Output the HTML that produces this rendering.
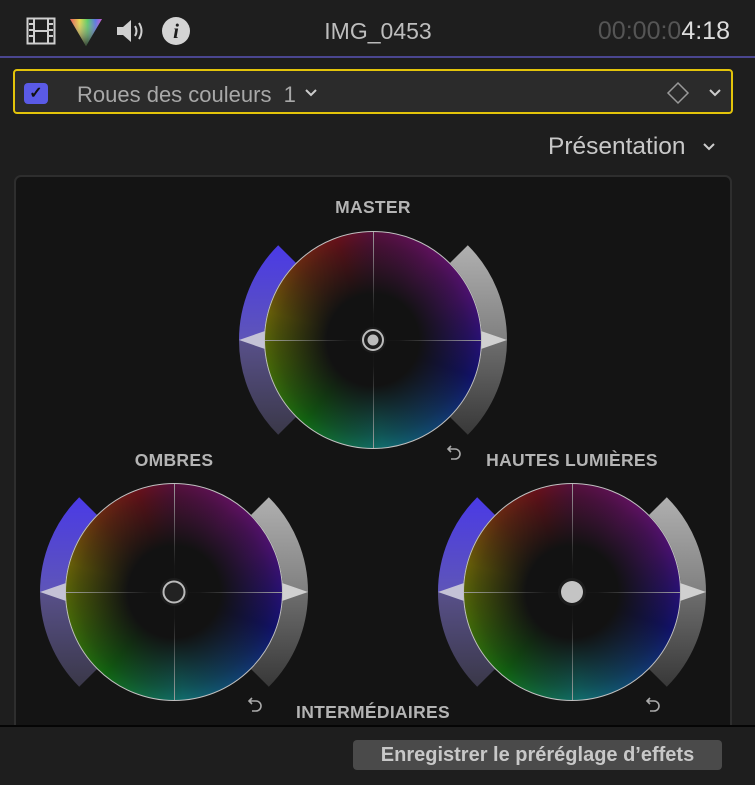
<!DOCTYPE html>
<html><head><meta charset="utf-8"><style>
*{margin:0;padding:0;box-sizing:border-box}
body{width:755px;height:785px;background:#1e1e1e;position:relative;overflow:hidden;font-family:"Liberation Sans",sans-serif}
.abs{position:absolute}
.lbl{position:absolute;color:#b4b4b4;font-weight:bold;font-size:17.5px;transform:translateX(-50%);white-space:nowrap;letter-spacing:.3px}
.wheel{position:absolute;width:270px;height:270px}
.disc{position:absolute;left:26px;top:26px;width:218px;height:218px;border-radius:50%;border:1.5px solid #c0c0c0;
background:radial-gradient(circle,#121212 0%,#121212 30%,rgba(18,18,18,.6) 62%,rgba(18,18,18,0) 100%),
conic-gradient(from 0deg,#901060 0deg,#a010a0 35deg,#7a10c0 65deg,#3a10c8 90deg,#1010b8 110deg,#1060c0 140deg,#10b8b8 175deg,#10b070 195deg,#10b010 220deg,#70b000 255deg,#b0a000 285deg,#b04010 315deg,#b01020 340deg,#901060 360deg)}
.vl{position:absolute;left:134.5px;top:27px;width:1px;height:216px;background:linear-gradient(#999,rgba(120,120,120,.05) 38%,rgba(0,0,0,0) 50%,rgba(120,120,120,.05) 62%,#999)}
.hl{position:absolute;top:134.5px;left:27px;height:1px;width:216px;background:linear-gradient(90deg,#999,rgba(120,120,120,.05) 38%,rgba(0,0,0,0) 50%,rgba(120,120,120,.05) 62%,#999)}
</style></head><body>
<div class="abs" style="left:0;top:0;width:755px;height:58px;background:#1e1e1e;border-bottom:2px solid #4a4690"></div>
<svg class="abs" style="left:26px;top:17px" width="30" height="28" viewBox="0 0 30 28">
<rect x="1.5" y="1.5" width="27" height="25" fill="none" stroke="#cfcfcf" stroke-width="2"/>
<line x1="8" y1="1" x2="8" y2="27" stroke="#cfcfcf" stroke-width="2"/><line x1="22" y1="1" x2="22" y2="27" stroke="#cfcfcf" stroke-width="2"/>
<g fill="#cfcfcf"><rect x="3" y="6" width="4" height="2"/><rect x="3" y="12" width="4" height="2"/><rect x="3" y="18" width="4" height="2"/><rect x="23" y="6" width="4" height="2"/><rect x="23" y="12" width="4" height="2"/><rect x="23" y="18" width="4" height="2"/>
<rect x="9" y="13" width="12" height="2"/></g></svg>
<svg class="abs" style="left:69px;top:17px" width="34" height="30" viewBox="0 0 34 30">
<defs><linearGradient id="tg" x1="0" y1="0" x2="1" y2="0"><stop offset="0" stop-color="#e03030"/><stop offset=".3" stop-color="#e0d020"/><stop offset=".55" stop-color="#30c040"/><stop offset=".8" stop-color="#3050e0"/><stop offset="1" stop-color="#c030c0"/></linearGradient>
<linearGradient id="tg2" x1="0" y1="0" x2="0" y2="1"><stop offset="0" stop-color="#fff" stop-opacity=".2"/><stop offset="1" stop-color="#333" stop-opacity=".9"/></linearGradient></defs>
<polygon points="1,2 33,2 17,29" fill="url(#tg)"/><polygon points="1,2 33,2 17,29" fill="url(#tg2)"/></svg>
<svg class="abs" style="left:115px;top:18px" width="32" height="26" viewBox="0 0 32 26">
<polygon points="2,9 8,9 16,2 16,24 8,17 2,17" fill="#cfcfcf"/>
<path d="M20,8 Q23,13 20,18" stroke="#cfcfcf" stroke-width="2" fill="none"/><path d="M24,5 Q29,13 24,21" stroke="#cfcfcf" stroke-width="2" fill="none"/></svg>
<div class="abs" style="left:162px;top:17px;width:28px;height:28px;border-radius:50%;background:#d4d4d4;color:#1e1e1e;font:italic bold 21px 'Liberation Serif',serif;text-align:center;line-height:28px">i</div>
<div class="abs" style="left:280px;top:18px;width:196px;text-align:center;color:#bdbdbd;font-size:23px">IMG_0453</div>
<div class="abs" style="right:25px;top:17px;font-size:25px;color:#555">00:00:0<span style="color:#ddd">4:18</span></div>
<div class="abs" style="left:13px;top:69px;width:720px;height:45px;border:2px solid #e3c40a;border-radius:4px;background:#2b2b2b"></div>
<div class="abs" style="left:24px;top:83px;width:24px;height:21px;border-radius:4px;background:#5a5ae6;color:#111;font-size:16px;text-align:center;line-height:21px;font-weight:bold">✓</div>
<div class="abs" style="left:77px;top:82px;color:#a8a8a8;font-size:22px">Roues des couleurs&nbsp; 1</div>
<svg class="abs" style="left:304px;top:88px" width="14" height="10"><path d="M2,2 L7,7 L12,2" stroke="#ccc" stroke-width="2" fill="none"/></svg>
<svg class="abs" style="left:666px;top:81px" width="24" height="24"><path d="M12,2 L22,12 L12,22 L2,12 Z" stroke="#999" stroke-width="1.5" fill="none"/></svg>
<svg class="abs" style="left:708px;top:88px" width="14" height="10"><path d="M2,2 L7,7 L12,2" stroke="#ccc" stroke-width="2" fill="none"/></svg>
<div class="abs" style="left:548px;top:133px;color:#c8c8c8;font-size:24.5px">Présentation</div>
<svg class="abs" style="left:702px;top:142px" width="14" height="10"><path d="M2,2 L7,7 L12,2" stroke="#ccc" stroke-width="2" fill="none"/></svg>
<div class="abs" style="left:14px;top:175px;width:718px;height:570px;border:2px solid #2e2e2e;border-radius:7px;background:#141414"></div>

<svg width="0" height="0" style="position:absolute"><defs>
<linearGradient id="lb1" x1="0" y1="0" x2="0" y2="1"><stop offset="0" stop-color="#4a3ae6"/><stop offset="1" stop-color="#5e55b8"/></linearGradient>
<linearGradient id="lb2" x1="0" y1="0" x2="0" y2="1"><stop offset="0" stop-color="#58508a"/><stop offset="1" stop-color="#3a3848"/></linearGradient>
<linearGradient id="rb1" x1="0" y1="0" x2="0" y2="1"><stop offset="0" stop-color="#b0b0b0"/><stop offset="1" stop-color="#808080"/></linearGradient>
<linearGradient id="rb2" x1="0" y1="0" x2="0" y2="1"><stop offset="0" stop-color="#6e6e6e"/><stop offset="1" stop-color="#383838"/></linearGradient>
<g id="arcs">
<path d="M40.2,40.2 A134,134 0 0 0 1,135 L26,135 A109,109 0 0 1 57.9,57.9 Z" fill="url(#lb1)"/>
<path d="M1,135 A134,134 0 0 0 40.2,229.8 L57.9,212.1 A109,109 0 0 1 26,135 Z" fill="url(#lb2)"/>
<path d="M229.8,40.2 A134,134 0 0 1 269,135 L244,135 A109,109 0 0 0 212.1,57.9 Z" fill="url(#rb1)"/>
<path d="M269,135 A134,134 0 0 1 229.8,229.8 L212.1,212.1 A109,109 0 0 0 244,135 Z" fill="url(#rb2)"/>
<polygon points="1,135 27,126 27,144" fill="#c4c2d6"/>
<polygon points="269,135 243,126 243,144" fill="#d0d0d0"/>
</g>
<g id="reset"><path d="M5,3 L2,6 L5,9 M2,6 H9 A5,5 0 0 1 9,16 H5" stroke="#aaa" stroke-width="1.6" fill="none"/></g>
</defs></svg>

<div class="lbl" style="left:373px;top:197px">MASTER</div>
<div class="wheel" style="left:238px;top:205px"><svg width="270" height="270" style="position:absolute"><use href="#arcs"/></svg><div class="disc"></div><div class="vl"></div><div class="hl"></div>
<svg width="270" height="270" style="position:absolute"><circle cx="135" cy="135" r="13" fill="#1c1c1c"/><circle cx="135" cy="135" r="10" fill="none" stroke="#bbb" stroke-width="2"/><circle cx="135" cy="135" r="5.5" fill="#bbb"/></svg></div>
<svg class="abs" style="left:446px;top:443px" width="18" height="18"><use href="#reset"/></svg>

<div class="lbl" style="left:174px;top:450px">OMBRES</div>
<div class="wheel" style="left:39px;top:457px"><svg width="270" height="270" style="position:absolute"><use href="#arcs"/></svg><div class="disc"></div><div class="vl"></div><div class="hl"></div>
<svg width="270" height="270" style="position:absolute"><circle cx="135" cy="135" r="14" fill="#1c1c1c"/><circle cx="135" cy="135" r="10.5" fill="#222" stroke="#bbb" stroke-width="2"/></svg></div>
<svg class="abs" style="left:247px;top:695px" width="18" height="18"><use href="#reset"/></svg>

<div class="lbl" style="left:572px;top:450px">HAUTES LUMIÈRES</div>
<div class="wheel" style="left:437px;top:457px"><svg width="270" height="270" style="position:absolute"><use href="#arcs"/></svg><div class="disc"></div><div class="vl"></div><div class="hl"></div>
<svg width="270" height="270" style="position:absolute"><circle cx="135" cy="135" r="14" fill="#1c1c1c"/><circle cx="135" cy="135" r="11" fill="#c4c4c4"/></svg></div>
<svg class="abs" style="left:645px;top:695px" width="18" height="18"><use href="#reset"/></svg>

<div class="lbl" style="left:373px;top:702px">INTERMÉDIAIRES</div>

<div class="abs" style="left:0;top:725px;width:755px;height:60px;background:#1e1e1e;border-top:2px solid #050505"></div>
<div class="abs" style="left:353px;top:740px;width:369px;height:30px;border-radius:4px;background:#4a4a4a;color:#c8c8c8;font-size:20px;font-weight:bold;text-align:center;line-height:30px">Enregistrer le préréglage d’effets</div>
</body></html>
